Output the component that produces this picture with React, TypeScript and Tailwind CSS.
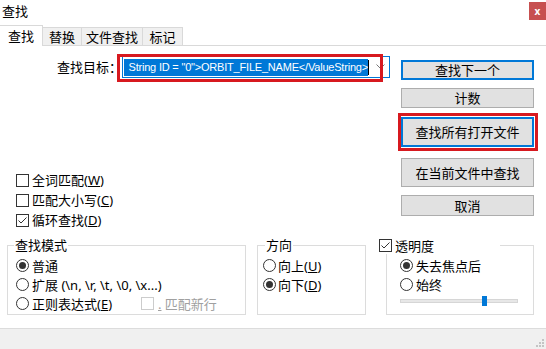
import React from 'react';

function CheckBox({ checked = false, disabled = false }: { checked?: boolean; disabled?: boolean }) {
  return (
    <span
      className={`w-[13px] h-[13px] shrink-0 bg-white border flex items-center justify-center ${
        disabled ? 'border-[#cccccc]' : 'border-[#333333]'
      }`}
    >
      {checked && (
        <svg width="11" height="11" viewBox="0 0 11 11">
          <polyline points="1.5,5.5 4,8 9.5,2.5" fill="none" stroke="#333333" strokeWidth="1" />
        </svg>
      )}
    </span>
  );
}

function Radio({ checked = false }: { checked?: boolean }) {
  return (
    <span className="w-[13px] h-[13px] shrink-0 rounded-full border border-[#333333] bg-white flex items-center justify-center">
      {checked && <span className="w-[7px] h-[7px] rounded-full bg-[#333333]" />}
    </span>
  );
}

function Button({ label, primary = false, h }: { label: string; primary?: boolean; h: string }) {
  return (
    <div
      className={`${h} w-full bg-[#e1e1e1] flex items-center justify-center ${
        primary ? 'border-2 border-[#0078d7]' : 'border border-[#adadad]'
      }`}
    >
      {label}
    </div>
  );
}

export default function App() {
  const tabs = [
    { label: '查找', w: 'w-[43px]', active: true },
    { label: '替换', w: 'w-[39px]', active: false },
    { label: '文件查找', w: 'w-[61px]', active: false },
    { label: '标记', w: 'w-[40px]', active: false },
  ];

  return (
    <div className="w-[546px] h-[349px] bg-white flex flex-col overflow-hidden text-[12px] leading-[16px] text-black font-['Noto_Sans','Noto_Sans_CJK_SC',sans-serif]">
      {/* title bar */}
      <div className="h-[24px] flex justify-between shrink-0">
        <span className="pl-[2px] pt-[3px] text-[13px]">查找</span>
        <div className="mt-[2px] w-[17px] h-[18px] bg-[#c75050] text-white flex items-center justify-center text-[10px] font-bold">
          x
        </div>
      </div>

      {/* tabs */}
      <div className="h-[22px] shrink-0 flex items-end border-b border-[#d9d9d9]">
        {tabs.map((t) =>
          t.active ? (
            <div
              key={t.label}
              className={`${t.w} h-[21px] -mb-px relative z-10 bg-white border-r border-t border-[#d9d9d9] flex items-center justify-center text-[13px]`}
            >
              {t.label}
            </div>
          ) : (
            <div
              key={t.label}
              className={`${t.w} h-[18px] bg-[#f0f0f0] border-r border-t border-[#d9d9d9] flex items-center justify-center text-[13px]`}
            >
              {t.label}
            </div>
          )
        )}
      </div>

      {/* main area */}
      <div className="h-[191px] shrink-0 flex">
        <div className="w-[401px] flex flex-col">
          <div className="mt-[10px] h-[22px] flex items-center">
            <span className="w-[122px] text-right text-[13px]">查找目标：</span>
            <div className="relative w-[268px] h-[22px] border border-[#0078d7] flex items-center">
              <div className="pointer-events-none absolute left-[-6px] top-[-3px] right-[6px] bottom-[-5px] border-[3px] border-[#d7191f]" />
              <span className="ml-[1px] h-[17px] w-[244px] overflow-hidden whitespace-nowrap bg-[#0078d7] text-white flex items-center justify-end font-['Liberation_Sans',sans-serif] text-[11px] tracking-[-0.2px]">
                <span className="shrink-0">String ID = "0"&gt;ORBIT_FILE_NAME&lt;/ValueString&gt;</span>
              </span>
              <span className="w-px h-[15px] bg-black" />
              <svg className="ml-auto mr-[4px]" width="9" height="6" viewBox="0 0 9 6">
                <polyline points="0.5,0.5 4.5,4.5 8.5,0.5" fill="none" stroke="#777777" strokeWidth="1" />
              </svg>
            </div>
          </div>

          <div className="mt-[92px] pl-[16px] flex flex-col text-[13px]">
            <div className="h-[20px] flex items-center gap-[3px]">
              <CheckBox />
              <span>
                全词匹配(<u>W</u>)
              </span>
            </div>
            <div className="h-[20px] flex items-center gap-[3px]">
              <CheckBox />
              <span>
                匹配大小写(<u>C</u>)
              </span>
            </div>
            <div className="h-[20px] flex items-center gap-[3px]">
              <CheckBox checked />
              <span>
                循环查找(<u>D</u>)
              </span>
            </div>
          </div>
        </div>

        <div className="w-[133px] flex flex-col text-[13px]">
          <div className="mt-[14px]">
            <Button label="查找下一个" primary h="h-[20px]" />
          </div>
          <div className="mt-[8px]">
            <Button label="计数" h="h-[20px]" />
          </div>
          <div className="mt-[9px] relative">
            <div className="pointer-events-none absolute -left-[3px] -right-[4px] -top-[4px] -bottom-[4px] border-[3px] border-[#d7191f]" />
            <Button label="查找所有打开文件" primary h="h-[30px]" />
          </div>
          <div className="mt-[11px]">
            <Button label="在当前文件中查找" h="h-[29px]" />
          </div>
          <div className="mt-[8px]">
            <Button label="取消" h="h-[21px]" />
          </div>
        </div>
      </div>

      {/* group boxes */}
      <div className="h-[78px] shrink-0 flex text-[13px]">
        <div className="ml-[7px] mt-[8px] w-[239px] h-[70px] border border-[#dcdcdc] relative pl-[8px] pt-[10px] flex flex-col">
          <span className="absolute left-[6px] top-[-9px] bg-white px-[1px]">查找模式</span>
          <div className="h-[19px] flex items-center gap-[3px]">
            <Radio checked />
            <span>普通</span>
          </div>
          <div className="h-[19px] flex items-center gap-[3px]">
            <Radio />
            <span>扩展 (\n, \r, \t, \0, \x...)</span>
          </div>
          <div className="h-[19px] flex items-center gap-[3px]">
            <Radio />
            <span className="w-[106px]">
              正则表达式(<u>E</u>)
            </span>
            <CheckBox disabled />
            <span className="ml-[1px] text-[#a0a0a0]">
              <u>.</u> 匹配新行
            </span>
          </div>
        </div>

        <div className="ml-[11px] mt-[8px] w-[109px] h-[70px] border border-[#dcdcdc] relative pl-[5px] pt-[10px] flex flex-col">
          <span className="absolute left-[7px] top-[-9px] bg-white px-[1px]">方向</span>
          <div className="h-[19px] flex items-center gap-[2px]">
            <Radio />
            <span>
              向上(<u>U</u>)
            </span>
          </div>
          <div className="h-[19px] flex items-center gap-[2px]">
            <Radio checked />
            <span>
              向下(<u>D</u>)
            </span>
          </div>
        </div>

        <div className="ml-[20px] mt-[8px] w-[148px] h-[70px] border border-[#dcdcdc] relative pl-[13px] pt-[10px] flex flex-col">
          <div className="absolute left-[-8px] top-[-9px] w-[121px] h-[17px] bg-white flex items-center gap-[3px]">
            <CheckBox checked />
            <span>透明度</span>
          </div>
          <div className="h-[19px] flex items-center gap-[3px]">
            <Radio checked />
            <span>失去焦点后</span>
          </div>
          <div className="h-[19px] flex items-center gap-[3px]">
            <Radio />
            <span>始终</span>
          </div>
          <div className="mt-[2px] w-[118px] h-[10px] relative flex items-center">
            <div className="w-full h-[4px] bg-[#e7e7e7] border border-[#d6d6d6]" />
            <div className="absolute left-[82px] top-0 w-[5px] h-[10px] bg-[#0078d7]" />
          </div>
        </div>
      </div>

      <div className="flex-1" />

      {/* bottom bar */}
      <div className="h-[21px] shrink-0 bg-[#f0f0f0] border-t border-[#dcdcdc] flex justify-end items-end">
        <svg width="10" height="10" viewBox="0 0 10 10" className="mr-[1px] mb-[1px]">
          <rect x="7" y="1" width="2" height="2" fill="#c4c4c4" />
          <rect x="4" y="4" width="2" height="2" fill="#c4c4c4" />
          <rect x="7" y="4" width="2" height="2" fill="#c4c4c4" />
          <rect x="1" y="7" width="2" height="2" fill="#c4c4c4" />
          <rect x="4" y="7" width="2" height="2" fill="#c4c4c4" />
          <rect x="7" y="7" width="2" height="2" fill="#c4c4c4" />
        </svg>
      </div>
    </div>
  );
}
